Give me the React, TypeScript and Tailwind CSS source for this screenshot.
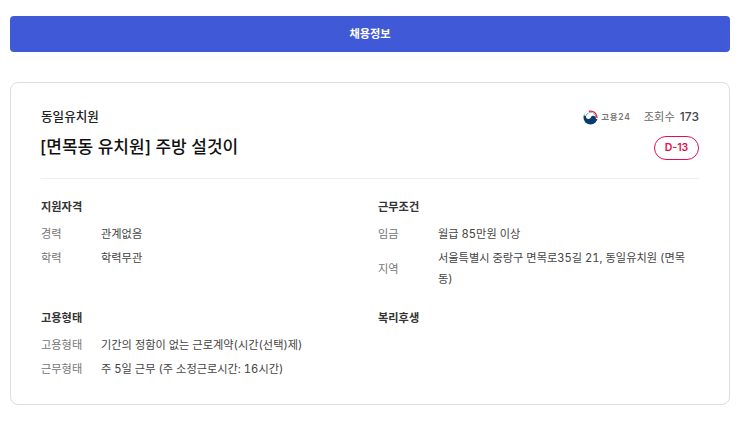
import type { ReactNode } from "react";

function Row({ label, children }: { label: string; children: ReactNode }) {
  return (
    <div className="flex items-center">
      <span className="w-[60px] shrink-0 text-[#767676]">{label}</span>
      <span className="flex-1 pr-[8px] leading-[21px] text-[#444] tabular-nums">{children}</span>
    </div>
  );
}

function Section({ title, children }: { title: string; children?: ReactNode }) {
  return (
    <div>
      <h3 className="mb-[8px] h-[18px] text-[11.2px] leading-[18px] font-semibold text-[#333]">{title}</h3>
      <div className="flex flex-col gap-[3px]">{children}</div>
    </div>
  );
}

function Mark() {
  return (
    <svg width="15" height="15" viewBox="0 0 16 16">
      <circle cx="8" cy="8" r="7.5" fill="#0b3a6e" />
      <path d="M3 7.5A5.2 5.2 0 0 1 13.4 8.4A2.6 2.6 0 0 0 8.6 7.4A2.9 2.9 0 0 1 3 7.5Z" fill="#ffffff" />
      <path d="M1 5.5A7.4 7.4 0 0 1 15.6 9.5H13.6A5.6 5.6 0 0 0 2.8 6.5Z" fill="#ffffff" />
      <path d="M6.2 1.4A6.8 6.8 0 0 1 14.8 8.6" fill="none" stroke="#d8233f" strokeWidth="1.3" />
    </svg>
  );
}

export default function App() {
  return (
    <div className="min-h-[422px] bg-white pt-[16px] pr-[26px] pl-[10px] font-['Inter','Noto_Sans_CJK_KR',sans-serif]">
      <button className="flex h-[36px] w-full items-center justify-center rounded-[4px] bg-[#4059d6] text-[11.2px] font-bold text-white">
        채용정보
      </button>

      <div className="mt-[30px] h-[323px] rounded-[8px] border border-[#ddd] px-[30px] pt-[24px]">
        <div className="flex items-center justify-between">
          <p className="text-[12.6px] leading-[20px] font-medium text-[#222]">동일유치원</p>
          <div className="flex items-center">
            <Mark />
            <span className="ml-[3px] text-[8.5px] font-semibold tracking-[0.8px] text-[#777]">고용24</span>
            <span className="ml-[13px] text-[11.2px] text-[#666]">
              조회수 <span className="ml-[2px] text-[12px] font-medium text-[#444]">173</span>
            </span>
          </div>
        </div>

        <div className="mt-[7px] flex items-start justify-between">
          <h1 className="-ml-px text-[17px] leading-[26px] font-medium text-[#111]">[면목동 유치원] 주방 설것이</h1>
          <span className="mt-[2px] flex h-[24px] w-[45px] items-center justify-center rounded-full border border-[#e0104f] text-[10.5px] font-semibold text-[#e0104f]">
            D-13
          </span>
        </div>

        <div className="mt-[18px] border-t border-[#eee]" />

        <div className="mt-[19px] grid grid-cols-2 gap-x-[16px] gap-y-[19px] text-[11.2px]">
          <Section title="지원자격">
            <Row label="경력">관계없음</Row>
            <Row label="학력">학력무관</Row>
          </Section>
          <Section title="근무조건">
            <Row label="임금">월급 85만원 이상</Row>
            <Row label="지역">서울특별시 중랑구 면목로35길 21, 동일유치원 (면목동)</Row>
          </Section>
          <Section title="고용형태">
            <Row label="고용형태">기간의 정함이 없는 근로계약(시간(선택)제)</Row>
            <Row label="근무형태">주 5일 근무 (주 소정근로시간: 16시간)</Row>
          </Section>
          <Section title="복리후생" />
        </div>
      </div>
    </div>
  );
}
